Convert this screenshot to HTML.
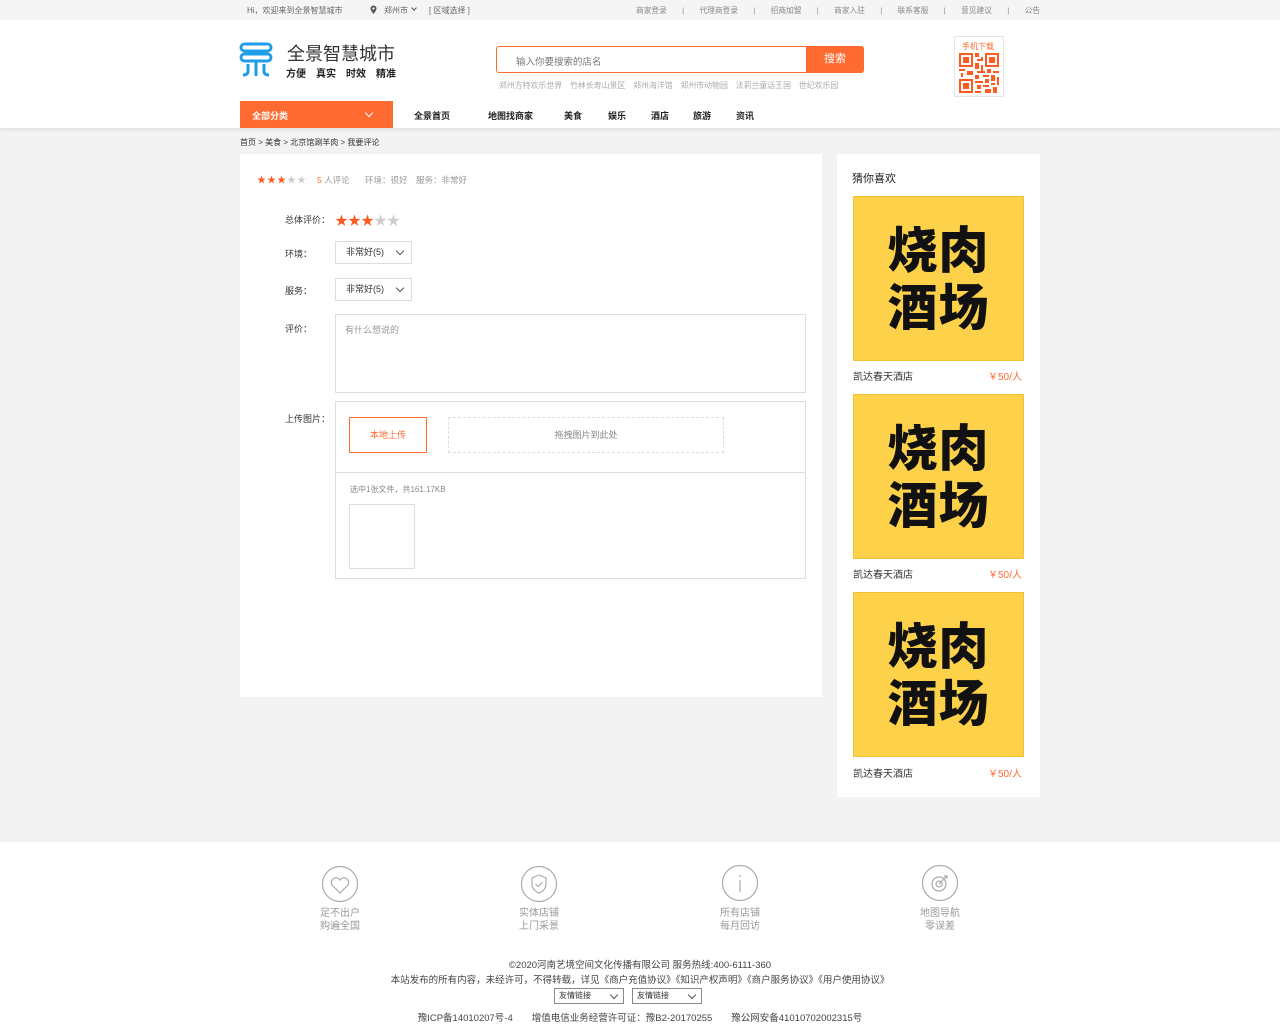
<!DOCTYPE html>
<html><head><meta charset="utf-8"><style>
*{margin:0;padding:0;box-sizing:border-box}
body{width:1280px;height:1031px;background:#f3f3f3;font-family:"Liberation Sans","Noto Sans CJK SC",sans-serif;color:#333;position:relative;overflow:hidden;font-size:9px}
.a{position:absolute;white-space:nowrap}
.top{position:absolute;left:0;top:0;width:1280px;height:20px;background:#f5f5f5;color:#666;font-size:8px}
.hdr{position:absolute;left:0;top:20px;width:1280px;height:108px;background:#fff;box-shadow:0 2px 3px rgba(0,0,0,.08)}
.gray{color:#999}
.sel{position:absolute;width:77px;height:23px;border:1px solid #ddd;background:#fff;font-size:9px;line-height:21px;padding-left:10px;color:#333}
.sel:after{content:"";position:absolute;right:8px;top:6px;width:5px;height:5px;border-right:1px solid #555;border-bottom:1px solid #555;transform:rotate(45deg)}
.food{position:absolute;left:853px;width:171px;height:165px;background:#fdd24a;border:1px solid #f2c232;text-align:center;font:900 50px/57px "Noto Sans CJK SC","WenQuanYi Zen Hei",sans-serif;color:#111;padding-top:22px;letter-spacing:1px}
.fn{position:absolute;left:853px;font-size:10px;color:#333}
.fp{position:absolute;left:988px;font-size:10px;color:#ff6a30}
.fi{position:absolute;width:60px;text-align:center;color:#999;font-size:10px;line-height:13px}
.fs{position:absolute;top:988px;width:70px;height:16px;border:1px solid #888;font-size:8px;line-height:14px;padding-left:4px;background:#fff}
.fs:after{content:"";position:absolute;right:6px;top:3px;width:5px;height:5px;border-right:1px solid #555;border-bottom:1px solid #555;transform:rotate(45deg)}
</style></head><body>
<div class="top">
 <span class="a" style="left:247px;top:5px">Hi，欢迎来到全景智慧城市</span>
 <svg class="a" style="left:370px;top:5px" width="7" height="10" viewBox="0 0 7 10"><path d="M3.5 0.5a3 3 0 0 1 3 3c0 2-3 5.5-3 5.5s-3-3.5-3-5.5a3 3 0 0 1 3-3z" fill="#555"/><circle cx="3.5" cy="3.5" r="1.1" fill="#fff"/></svg>
 <span class="a" style="left:384px;top:5px">郑州市</span>
 <div class="a" style="left:412px;top:6px;width:4px;height:4px;border-right:1px solid #555;border-bottom:1px solid #555;transform:rotate(45deg)"></div>
 <span class="a" style="left:429px;top:5px">[ 区域选择 ]</span>
 <span class="a" style="left:636px;top:5px;color:#888;font-size:7.7px">商家登录　　|　　代理商登录　　|　　招商加盟　　|　　商家入驻　　|　　联系客服　　|　　意见建议　　|　　公告</span>
</div>
<div class="hdr"></div>
<svg class="a" style="left:239px;top:42px" width="35" height="35" viewBox="0 0 35 35" fill="none" stroke="#1e9ee8" stroke-width="3"><rect x="2" y="2" width="30" height="7" rx="3.5"/><rect x="2" y="12" width="30" height="7" rx="3.5"/><path d="M17 19v15M9 22v7q0 4-5 4M25 22v7q0 4 5 4"/></svg>
<span class="a" style="left:287px;top:40px;font-size:18px;color:#333">全景智慧城市</span>
<span class="a" style="left:286px;top:65px;font-size:10px;color:#222;font-weight:bold;word-spacing:4px">方便　真实　时效　精准</span>
<div class="a" style="left:496px;top:46px;width:368px;height:27px;border:1px solid #ff6a30;border-radius:3px;background:#fff"></div>
<span class="a" style="left:516px;top:54px;font-size:9.5px;color:#777">输入你要搜索的店名</span>
<div class="a" style="left:806px;top:46px;width:58px;height:27px;background:#ff6a30;border-radius:0 3px 3px 0;color:#fff;font-size:11px;text-align:center;line-height:27px">搜索</div>
<span class="a gray" style="left:499px;top:80px;font-size:7.9px;color:#aaa">郑州方特欢乐世界　竹林长寿山景区　郑州海洋馆　郑州市动物园　法莉兰童话王国　世纪欢乐园</span>
<div class="a" style="left:954px;top:36px;width:50px;height:61px;border:1px solid #e5e5e5;background:#fff"></div>
<span class="a" style="left:962px;top:41px;font-size:8px;color:#ff6a30">手机下载</span>
<svg class="a" style="left:959px;top:53px" width="40" height="40" viewBox="0 0 20 20" fill="#ff5a20"><path d="M0 0h7v7h-7zM1 1v5h5v-5zM2 2h3v3h-3zM13 0h7v7h-7zM14 1v5h5v-5zM15 2h3v3h-3zM0 13h7v7h-7zM1 14v5h5v-5zM2 15h3v3h-3zM8 0h2v2h-2zM9 3h3v1h-3zM8 5h2v3h-2zM11 6h1v3h-1zM0 8h3v1h-3zM4 9h3v2h-3zM9 9h4v1h-4zM14 8h2v2h-2zM17 9h3v1h-3zM1 10h1v2h-1zM8 11h2v2h-2zM12 11h3v1h-3zM16 11h2v3h-2zM19 12h1v4h-1zM8 14h4v1h-4zM13 13h2v2h-2zM9 16h2v2h-2zM12 16h3v1h-3zM16 15h2v1h-2zM13 18h3v2h-3zM17 17h2v3h-2zM8 19h3v1h-3zM11 2h1v2h-1z"/></svg>
<div class="a" style="left:240px;top:101px;width:153px;height:27px;background:#ff6a30"></div>
<span class="a" style="left:252px;top:109px;color:#fff;font-size:9px;font-weight:bold">全部分类</span>
<div class="a" style="left:366px;top:110px;width:6px;height:6px;border-right:1.5px solid #fff;border-bottom:1.5px solid #fff;transform:rotate(45deg)"></div>
<span class="a" style="left:414px;top:109px;font-weight:bold;color:#222">全景首页</span>
<span class="a" style="left:488px;top:109px;font-weight:bold;color:#222">地图找商家</span>
<span class="a" style="left:564px;top:109px;font-weight:bold;color:#222">美食</span>
<span class="a" style="left:608px;top:109px;font-weight:bold;color:#222">娱乐</span>
<span class="a" style="left:651px;top:109px;font-weight:bold;color:#222">酒店</span>
<span class="a" style="left:693px;top:109px;font-weight:bold;color:#222">旅游</span>
<span class="a" style="left:736px;top:109px;font-weight:bold;color:#222">资讯</span>
<span class="a" style="left:240px;top:137px;font-size:8px">首页 &gt; 美食 &gt; 北京馆涮羊肉 &gt; 我要评论</span>

<div class="a" style="left:240px;top:154px;width:582px;height:543px;background:#fff"></div>
<span class="a" style="left:257px;top:173px;font-size:9px;color:#ff5a20;letter-spacing:1px">★★★<span style="color:#ccc">★★</span></span>
<span class="a" style="left:317px;top:174px;font-size:8.5px;color:#ff6a30">5 <span style="color:#999">人评论</span></span>
<span class="a" style="left:365px;top:174px;font-size:8.5px;color:#999">环境：很好　服务：非常好</span>
<span class="a" style="left:285px;top:213px">总体评价：</span>
<span class="a" style="left:335px;top:210px;font-size:13px;color:#ff5a20;letter-spacing:0px">★★★<span style="color:#ccc">★★</span></span>
<span class="a" style="left:285px;top:247px">环境：</span>
<div class="sel" style="left:335px;top:241px">非常好(5)</div>
<span class="a" style="left:285px;top:284px">服务：</span>
<div class="sel" style="left:335px;top:278px">非常好(5)</div>
<span class="a" style="left:285px;top:322px">评价：</span>
<div class="a" style="left:335px;top:314px;width:471px;height:79px;border:1px solid #ddd"></div>
<span class="a" style="left:345px;top:323px;color:#999">有什么想说的</span>
<span class="a" style="left:285px;top:412px">上传图片：</span>
<div class="a" style="left:335px;top:401px;width:471px;height:178px;border:1px solid #ddd"></div>
<div class="a" style="left:336px;top:472px;width:469px;height:1px;background:#ddd"></div>
<div class="a" style="left:349px;top:417px;width:78px;height:36px;border:1px solid #ff6a30;color:#ff6a30;text-align:center;line-height:34px">本地上传</div>
<div class="a" style="left:448px;top:417px;width:276px;height:36px;border:1px dashed #ddd;color:#888;text-align:center;line-height:34px">拖拽图片到此处</div>
<span class="a" style="left:350px;top:484px;font-size:8px;color:#888">选中1张文件，共161.17KB</span>
<div class="a" style="left:349px;top:504px;width:66px;height:65px;border:1px solid #ddd"></div>

<div class="a" style="left:837px;top:154px;width:203px;height:643px;background:#fff"></div>
<span class="a" style="left:852px;top:170px;font-size:11px;color:#222">猜你喜欢</span>
<div class="food" style="top:196px">烧肉<br>酒场</div>
<span class="fn" style="top:368px">凯达春天酒店</span><span class="fp" style="top:368px">￥50/人</span>
<div class="food" style="top:394px">烧肉<br>酒场</div>
<span class="fn" style="top:566px">凯达春天酒店</span><span class="fp" style="top:566px">￥50/人</span>
<div class="food" style="top:592px">烧肉<br>酒场</div>
<span class="fn" style="top:765px">凯达春天酒店</span><span class="fp" style="top:765px">￥50/人</span>

<div class="a" style="left:0;top:842px;width:1280px;height:189px;background:#fff"></div>
<svg class="a" style="left:321px;top:865px" width="38" height="38" viewBox="0 0 38 38" fill="none" stroke="#aaa" stroke-width="1.2"><circle cx="19" cy="19" r="17.5"/><path d="M19 28l-8-8a4.5 4.5 0 0 1 8-5a4.5 4.5 0 0 1 8 5z"/></svg>
<svg class="a" style="left:520px;top:865px" width="38" height="38" viewBox="0 0 38 38" fill="none" stroke="#aaa" stroke-width="1.2"><circle cx="19" cy="19" r="17.5"/><path d="M19 10l7 3v6c0 5-4 8-7 9c-3-1-7-4-7-9v-6z"/><path d="M15.5 19l2.5 2.5 4.5-4.5"/></svg>
<svg class="a" style="left:721px;top:864px" width="38" height="38" viewBox="0 0 38 38" fill="none" stroke="#aaa" stroke-width="1.2"><circle cx="19" cy="19" r="17.5"/><path d="M19 16v12M19 11v2"/></svg>
<svg class="a" style="left:921px;top:864px" width="38" height="38" viewBox="0 0 38 38" fill="none" stroke="#aaa" stroke-width="1.2"><circle cx="19" cy="19" r="17.5"/><circle cx="18" cy="20" r="7"/><circle cx="18" cy="20" r="3"/><path d="M18 20l8-8M23 12h3v3"/></svg>
<div class="fi" style="left:310px;top:907px">足不出户<br>购遍全国</div>
<div class="fi" style="left:509px;top:907px">实体店铺<br>上门采景</div>
<div class="fi" style="left:710px;top:907px">所有店铺<br>每月回访</div>
<div class="fi" style="left:910px;top:907px">地图导航<br>零误差</div>
<div class="a" style="left:0;width:1280px;text-align:center;top:957px;font-size:9.5px;color:#444">©2020河南艺境空间文化传播有限公司 服务热线:400-6111-360</div>
<div class="a" style="left:0;width:1280px;text-align:center;top:972px;font-size:9.5px;color:#444">本站发布的所有内容，未经许可，不得转载，详见《商户充值协议》《知识产权声明》《商户服务协议》《用户使用协议》</div>
<div class="fs" style="left:554px">友情链接</div>
<div class="fs" style="left:632px">友情链接</div>
<div class="a" style="left:0;width:1280px;text-align:center;top:1010px;font-size:9.5px;color:#444">豫ICP备14010207号-4　　增值电信业务经营许可证：豫B2-20170255　　豫公网安备41010702002315号</div>
</body></html>
